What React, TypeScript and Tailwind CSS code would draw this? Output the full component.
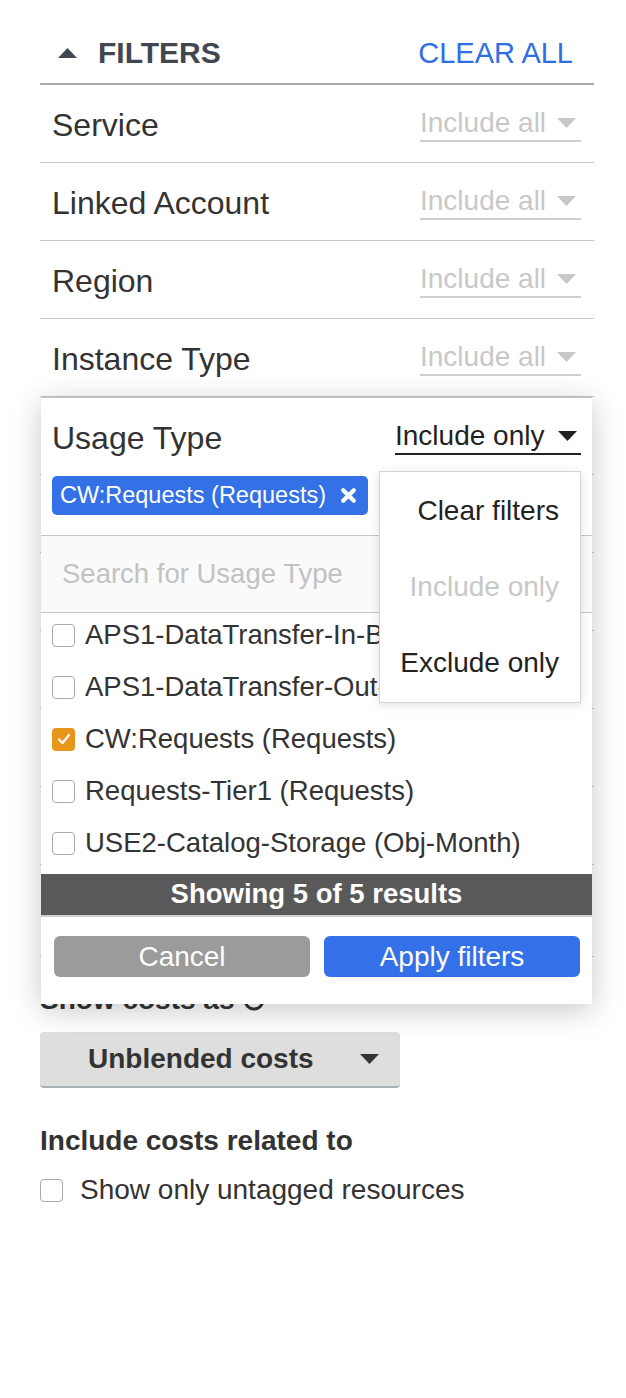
import React from "react";

const rows = ["Service", "Linked Account", "Region", "Instance Type"];
// rangées masquées sous le panneau : seules leurs lignes dépassent
const hiddenRows = 6;

const items = [
  { label: "APS1-DataTransfer-In-Bytes (GB)", checked: false },
  { label: "APS1-DataTransfer-Out-Bytes (GB)", checked: false },
  { label: "CW:Requests (Requests)", checked: true },
  { label: "Requests-Tier1 (Requests)", checked: false },
  { label: "USE2-Catalog-Storage (Obj-Month)", checked: false },
];

function Caret({ color, up = false }: { color: string; up?: boolean }) {
  return (
    <svg width="19" height="10" viewBox="0 0 19 10" className="shrink-0">
      <polygon points={up ? "0,10 19,10 9.5,0" : "0,0 19,0 9.5,10"} fill={color} />
    </svg>
  );
}

function Box({ checked = false }: { checked?: boolean }) {
  if (checked) {
    return (
      <span className="flex h-[23px] w-[23px] shrink-0 items-center justify-center rounded-[4px] bg-[#e8951c]">
        <svg width="14" height="12" viewBox="0 0 14 12">
          <path d="M2 6.5 L5.5 10 L12 2" stroke="white" strokeWidth="2.2" fill="none" strokeLinecap="round" strokeLinejoin="round" />
        </svg>
      </span>
    );
  }
  return <span className="h-[23px] w-[23px] shrink-0 rounded-[4px] border border-[#a9a9a9] bg-white" />;
}

export default function App() {
  return (
    <div className="min-h-[1398px] bg-white font-['Liberation_Sans',Arial,sans-serif] text-[#333]">
      <div className="relative ml-[40px] w-[554px]">
        {/* entete */}
        <div className="flex h-[85px] items-center justify-between border-b-2 border-[#a6adb1] pt-[23px] pl-[18px] pr-[21px]">
          <div className="flex items-center gap-[21px]">
            <Caret color="#414750" up />
            <span className="text-[30px] font-bold leading-none text-[#414750]">FILTERS</span>
          </div>
          <span className="text-[29px] leading-none text-[#2f6fe6]">CLEAR ALL</span>
        </div>

        {rows.map((r) => (
          <div key={r} className="flex h-[78px] items-center justify-between border-b border-[#c6c6c6] pt-[3px] pl-3 pr-[13px]">
            <span className="text-[32px] leading-[36px]">{r}</span>
            <div className="flex w-[161px] items-center justify-between border-b-2 border-[#d0d0d0] pr-[5px] pb-[2px]">
              <span className="text-[28px] leading-[30px] text-[#c8c8c8]">Include all</span>
              <Caret color="#c8c8c8" />
            </div>
          </div>
        ))}
        {Array.from({ length: hiddenRows }).map((_, i) => (
          <div key={i} className="h-[78px] border-b border-[#c6c6c6]" />
        ))}
        <div className="h-[92px] border-b border-[#c6c6c6]" />

        <div className="mt-[27px] flex items-center gap-2 text-[28px] font-bold leading-[32px]">
          Show costs as
          <svg width="22" height="22" viewBox="0 0 22 22">
            <circle cx="11" cy="11" r="9" stroke="#333" strokeWidth="3" fill="none" />
          </svg>
        </div>
        <div className="mt-4 flex h-[56px] w-[360px] items-center justify-between rounded-[4px] border-b-2 border-[#a9b2b7] bg-[#dedede] pl-[48px] pr-[21px]">
          <span className="text-[28px] font-bold">Unblended costs</span>
          <Caret color="#333" />
        </div>
        <div className="mt-[37px] text-[28px] font-bold leading-[32px]">Include costs related to</div>
        <div className="mt-[17px] flex items-center gap-[17px]">
          <Box />
          <span className="text-[28px] leading-[32px]">Show only untagged resources</span>
        </div>

        {/* panneau Usage Type */}
        <div className="absolute top-[397px] left-px w-[551px] border-t border-[#c4c4c4] bg-white shadow-[0_6px_28px_rgba(0,0,0,0.22)]">
          <div className="border-b border-[#c6c6c6] px-[11px] pt-5 pb-5">
            <div className="flex h-[40px] items-center justify-between">
              <span className="text-[32px] leading-[36px]">Usage Type</span>
              <div className="flex w-[186px] items-center justify-between border-b-2 border-[#222] pr-[4px] pb-[2px]">
                <span className="text-[28px] leading-[30px] text-[#222]">Include only</span>
                <Caret color="#222" />
              </div>
            </div>
            <div className="mt-[18px] flex h-[39px] w-[316px] items-center justify-between rounded-[5px] bg-[#3470e6] pl-2 pr-[11px] text-white">
              <span className="text-[23.5px] leading-none">CW:Requests (Requests)</span>
              <svg width="17" height="17" viewBox="0 0 16 16">
                <path d="M3 3 L13 13 M13 3 L3 13" stroke="white" strokeWidth="4" strokeLinecap="round" />
              </svg>
            </div>
          </div>

          <div className="flex h-[77px] items-center border-b border-[#c6c6c6] bg-[#fafafa] pl-[21px]">
            <span className="text-[27.5px] text-[#c2c2c2]">Search for Usage Type</span>
          </div>

          <div className="h-[261px] overflow-hidden">
            <div className="-mt-[4px]">
              {items.map((it) => (
                <div key={it.label} className="flex h-[52px] items-center gap-[10px] pl-[11px]">
                  <Box checked={it.checked} />
                  <span className="whitespace-nowrap text-[27.5px] leading-none">{it.label}</span>
                </div>
              ))}
            </div>
          </div>

          <div className="flex h-[43px] items-center justify-center border-b-2 border-[#cfcfcf] bg-[#595959] pb-[2px]">
            <span className="text-[27.5px] font-bold text-white">Showing 5 of 5 results</span>
          </div>

          <div className="flex gap-[14px] pt-[19px] pb-[27px] pl-[13px] pr-[12px]">
            <button className="flex h-[41px] flex-1 items-center justify-center rounded-[6px] bg-[#9b9b9b] text-[28px] text-white">
              Cancel
            </button>
            <button className="flex h-[41px] flex-1 items-center justify-center rounded-[6px] bg-[#3470e8] text-[28px] text-white">
              Apply filters
            </button>
          </div>

          {/* menu */}
          <div className="absolute top-[73px] left-[338px] w-[202px] border border-[#d6d6d6] bg-white py-px shadow-[0_2px_10px_rgba(0,0,0,0.12)]">
            {[
              { t: "Clear filters", c: "text-[#222]" },
              { t: "Include only", c: "text-[#c8c8c8]" },
              { t: "Exclude only", c: "text-[#222]" },
            ].map((m) => (
              <div key={m.t} className={`flex h-[76px] items-center justify-end pr-[21px] text-[28px] ${m.c}`}>
                {m.t}
              </div>
            ))}
          </div>
        </div>
      </div>
    </div>
  );
}
